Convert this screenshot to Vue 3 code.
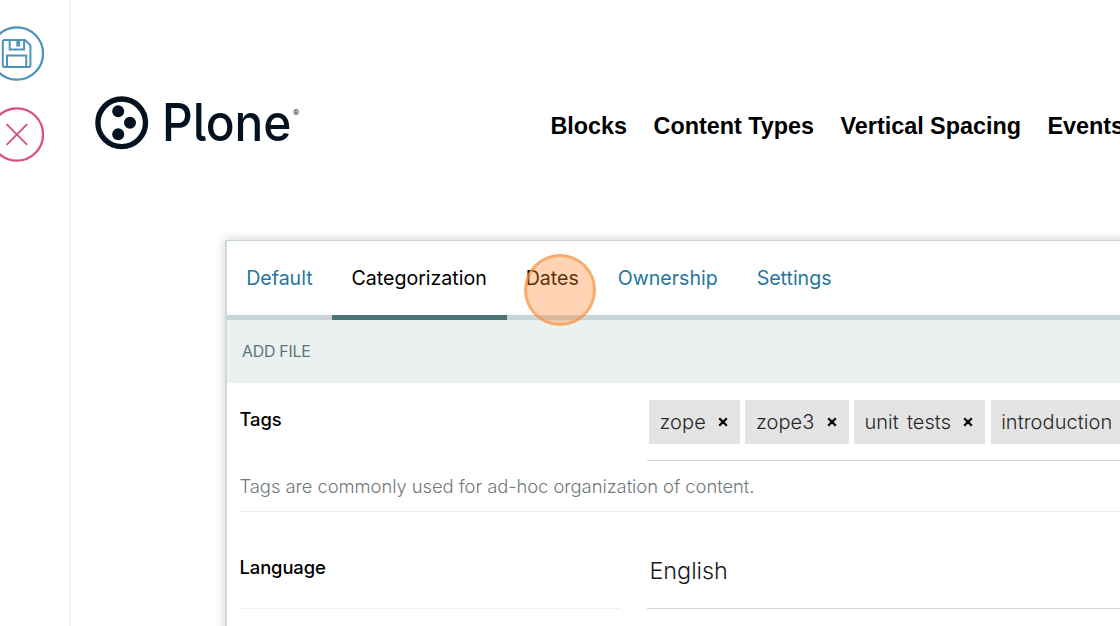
<script setup>
const nav = ['Blocks', 'Content Types', 'Vertical Spacing', 'Events']
const tabs = ['Default', 'Categorization', 'Dates', 'Ownership', 'Settings']
const active = 'Categorization'
const tags = ['zope', 'zope3', 'unit tests', 'introduction']
</script>

<template>
  <div class="page">
    <aside class="toolbar">
      <button class="tool save" aria-label="Save">
        <svg width="55" height="55" viewBox="0 0 55 55" fill="none" stroke="currentColor">
          <circle cx="27.5" cy="27.5" r="26.2" stroke-width="2.3" />
          <path d="M15.2 14H35.6L41 19.4V39.2Q41 41 39.2 41H15.2Q13.4 41 13.4 39.2V15.8Q13.4 14 15.2 14Z" stroke-width="2" />
          <path d="M20.3 14V23.6H34.7V14M17.6 41V29.4H36.8V41" stroke-width="2" />
          <path d="M28.8 15V20.6" stroke-width="3.8" />
        </svg>
      </button>
      <button class="tool cancel" aria-label="Cancel">
        <svg width="55" height="55" viewBox="0 0 55 55" fill="none" stroke="currentColor">
          <circle cx="27.5" cy="27.5" r="26.2" stroke-width="2.3" />
          <path d="M17.2 17.2L37.8 37.8M37.8 17.2L17.2 37.8" stroke-width="1.9" />
        </svg>
      </button>
    </aside>
    <main class="content">
      <header class="header">
        <svg class="logo" width="210" height="60" viewBox="0 0 210 60" fill="#04121f">
          <circle cx="26.7" cy="29.8" r="23.8" fill="none" stroke="#04121f" stroke-width="5.4" />
          <circle cx="23.2" cy="18.3" r="6" />
          <circle cx="35" cy="29.8" r="6" />
          <circle cx="23.2" cy="41.2" r="6" />
          <text class="wordmark" x="67" y="48" textLength="129.5" lengthAdjust="spacingAndGlyphs">Plone</text>
          <text class="reg" x="198" y="21.8">®</text>
        </svg>
        <nav class="nav">
          <a v-for="n in nav" :key="n">{{ n }}</a>
        </nav>
      </header>
      <section class="panel">
        <div class="tabs">
          <div v-for="t in tabs" :key="t" class="tab" :class="{ active: t === active, hovered: t === 'Dates' }">
            <span>{{ t }}</span>
            <i v-if="t === 'Dates'" class="pointer"></i>
          </div>
        </div>
        <div class="title">ADD FILE</div>
        <div class="row tags-row">
          <div class="line">
            <label>Tags</label>
            <div class="select">
              <div v-for="t in tags" :key="t" class="tag">
                <span>{{ t }}</span>
                <svg width="10" height="10" viewBox="0 0 10 10"><path d="M1.2 1.2L8.8 8.8M8.8 1.2L1.2 8.8" stroke="#000" stroke-width="2.3" /></svg>
              </div>
            </div>
          </div>
          <p class="help">Tags are commonly used for ad-hoc organization of content.</p>
        </div>
        <div class="row lang-row">
          <label>Language</label>
          <div class="value">English</div>
        </div>
      </section>
    </main>
  </div>
</template>

<style>
body { overflow: hidden; background: #fff; }
</style>
<style scoped>
* { box-sizing: border-box; }
.page { display: flex; width: 1120px; height: 626px; overflow: hidden; background: #fff; font-family: Inter, "Liberation Sans", sans-serif; color: #000; }
.toolbar { flex: none; width: 71px; border-right: 2px solid #f4f4f8; padding-top: 26px; display: flex; flex-direction: column; gap: 25.5px; }
.tool { border: 0; padding: 0; background: none; width: 55px; height: 55px; margin-left: -11px; }
.tool svg { display: block; transform: translateX(.4px); }
.save { color: #4d94bb; }
.cancel { color: #d9507f; }
.content { flex: 1; min-width: 0; }
.header { height: 240px; display: flex; padding-left: 24px; }
.logo { flex: none; margin-top: 93px; overflow: visible; }
.wordmark { font: 500 51.5px Inter, sans-serif; font-feature-settings: "cv05"; }
.reg { font: 8px Roboto, sans-serif; }
.nav { display: flex; gap: 26.5px; margin-left: 245.5px; margin-top: 112px; font: bold 23.4px/28px "Liberation Sans", sans-serif; letter-spacing: -.02px; white-space: nowrap; }
.panel { width: 1000px; height: 500px; margin-left: 154px; border: 1px solid #c5d3d6; border-left: 2px solid #cdd9db; box-shadow: 0 0 10px rgba(0, 0, 0, .2); }
.tabs { display: flex; height: 79px; border-bottom: 5px solid #c7d5d8; }
.tab { position: relative; height: 79px; padding: 0 19.8px 0 19.2px; font-size: 19.6px; letter-spacing: -.02px; line-height: 75px; color: #2477a0; }
.tab.active { color: #000; border-bottom: 5px solid #4c7474; }
.tab.hovered { color: #000; }
.pointer { position: absolute; left: 17.5px; top: 13px; width: 72px; height: 72px; border-radius: 50%; background: rgba(255, 133, 45, .36); border: 3px solid rgba(246, 145, 65, .6); }
.title { height: 63px; padding-left: 15px; background: #ebf0f0; color: #587878; font-size: 15.8px; letter-spacing: -.2px; line-height: 63px; }
.row { margin-left: 12.5px; }
.tags-row { height: 129px; border-bottom: 1px solid #e8eeef; }
.line { display: flex; height: 78px; }
label { flex: none; width: 407.5px; font-size: 18.4px; font-weight: 500; letter-spacing: -.1px; line-height: 24px; padding-top: 25px; }
.line label { padding-top: 24px; }
.select { flex: 1; display: flex; gap: 5.2px; padding: 16.5px 0 0 2px; border-bottom: 1.5px solid #c7d5d8; overflow: hidden; }
.tag { flex: none; display: flex; align-items: center; height: 44px; line-height: 44px; padding: 0 12px 0 10.5px; gap: 12.4px; background: #e4e4e4; color: #282828; font-size: 20px; letter-spacing: .06px; word-spacing: 2.4px; font-weight: 300; }
.help { margin: 13px 0 0; color: #70797c; font-size: 18.4px; font-weight: 300; letter-spacing: -.05px; line-height: 24px; }
.lang-row { display: flex; height: 97px; }
.lang-row label { width: 380px; padding-top: 43px; margin-right: 27.5px; border-bottom: 1.5px solid #eef2f2; }
.value { flex: 1; padding: 43.6px 0 0 2.5px; font-size: 23.4px; font-weight: 300; letter-spacing: -.05px; line-height: 30px; color: #181818; border-bottom: 1.5px solid #c7d5d8; }
</style>
